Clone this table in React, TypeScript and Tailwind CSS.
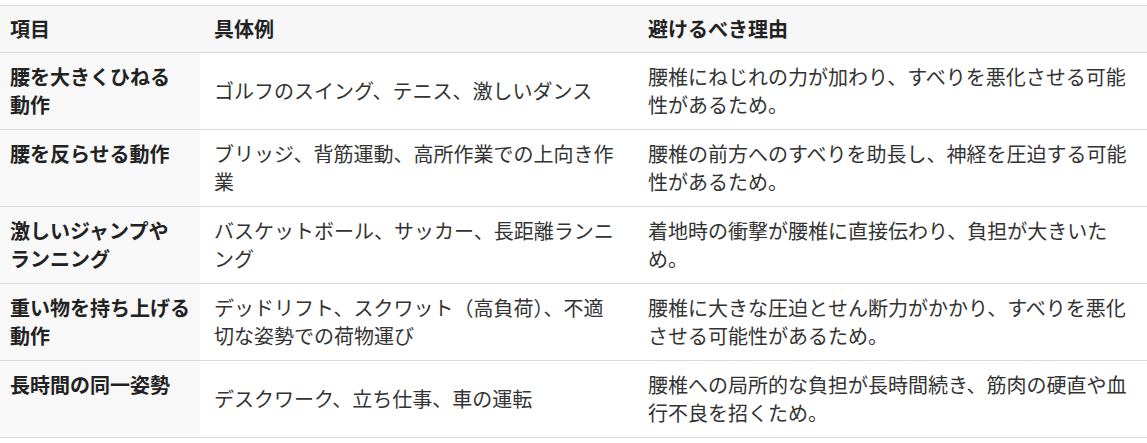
import React from "react";

const rows: { item: React.ReactNode; key: string; example: string; reason: string }[] = [
  {
    key: "a",
    item: (
      <>
        腰を大きくひねる
        <br />
        動作
      </>
    ),
    example: "ゴルフのスイング、テニス、激しいダンス",
    reason: "腰椎にねじれの力が加わり、すべりを悪化させる可能性があるため。",
  },
  {
    key: "b",
    item: "腰を反らせる動作",
    example: "ブリッジ、背筋運動、高所作業での上向き作業",
    reason: "腰椎の前方へのすべりを助長し、神経を圧迫する可能性があるため。",
  },
  {
    key: "c",
    item: (
      <>
        激しいジャンプや
        <br />
        ランニング
      </>
    ),
    example: "バスケットボール、サッカー、長距離ランニング",
    reason: "着地時の衝撃が腰椎に直接伝わり、負担が大きいため。",
  },
  {
    key: "d",
    item: (
      <>
        重い物を持ち上げる
        <br />
        動作
      </>
    ),
    example: "デッドリフト、スクワット（高負荷）、不適切な姿勢での荷物運び",
    reason: "腰椎に大きな圧迫とせん断力がかかり、すべりを悪化させる可能性があるため。",
  },
  {
    key: "e",
    item: "長時間の同一姿勢",
    example: "デスクワーク、立ち仕事、車の運転",
    reason: "腰椎への局所的な負担が長時間続き、筋肉の硬直や血行不良を招くため。",
  },
];

export default function App() {
  return (
    <div
      className="w-[1147px] h-[443px] bg-white pt-[5px] overflow-hidden"
      style={{ fontFamily: '"Noto Sans CJK JP", "Noto Sans", sans-serif' }}
    >
      <table className="w-[1147px] table-fixed border-collapse text-[20px] leading-[28px] text-[#333333]">
        <colgroup>
          <col className="w-[200px]" />
          <col className="w-[436px]" />
          <col className="w-[511px]" />
        </colgroup>
        <thead>
          <tr className="bg-[#f7f7f7] border-y border-[#d9d9d9]">
            <th className="pl-[10px] pr-[4px] py-[9px] text-left font-bold text-[#222222] align-middle">項目</th>
            <th className="pl-[14px] pr-[16px] py-[9px] text-left font-bold text-[#222222] align-middle">具体例</th>
            <th className="pl-[12px] pr-[10px] py-[9px] text-left font-bold text-[#222222] align-middle">避けるべき理由</th>
          </tr>
        </thead>
        <tbody>
          {rows.map((r) => (
            <tr key={r.key} className="border-b border-[#d9d9d9]">
              <td className="bg-[#f8f8f8] pl-[10px] pr-[4px] py-[10px] align-top font-bold text-[#222222] whitespace-nowrap">
                {r.item}
              </td>
              <td className="pl-[14px] pr-[16px] py-[10px] align-middle">{r.example}</td>
              <td className="pl-[12px] pr-[10px] py-[10px] align-middle">{r.reason}</td>
            </tr>
          ))}
        </tbody>
      </table>
    </div>
  );
}
